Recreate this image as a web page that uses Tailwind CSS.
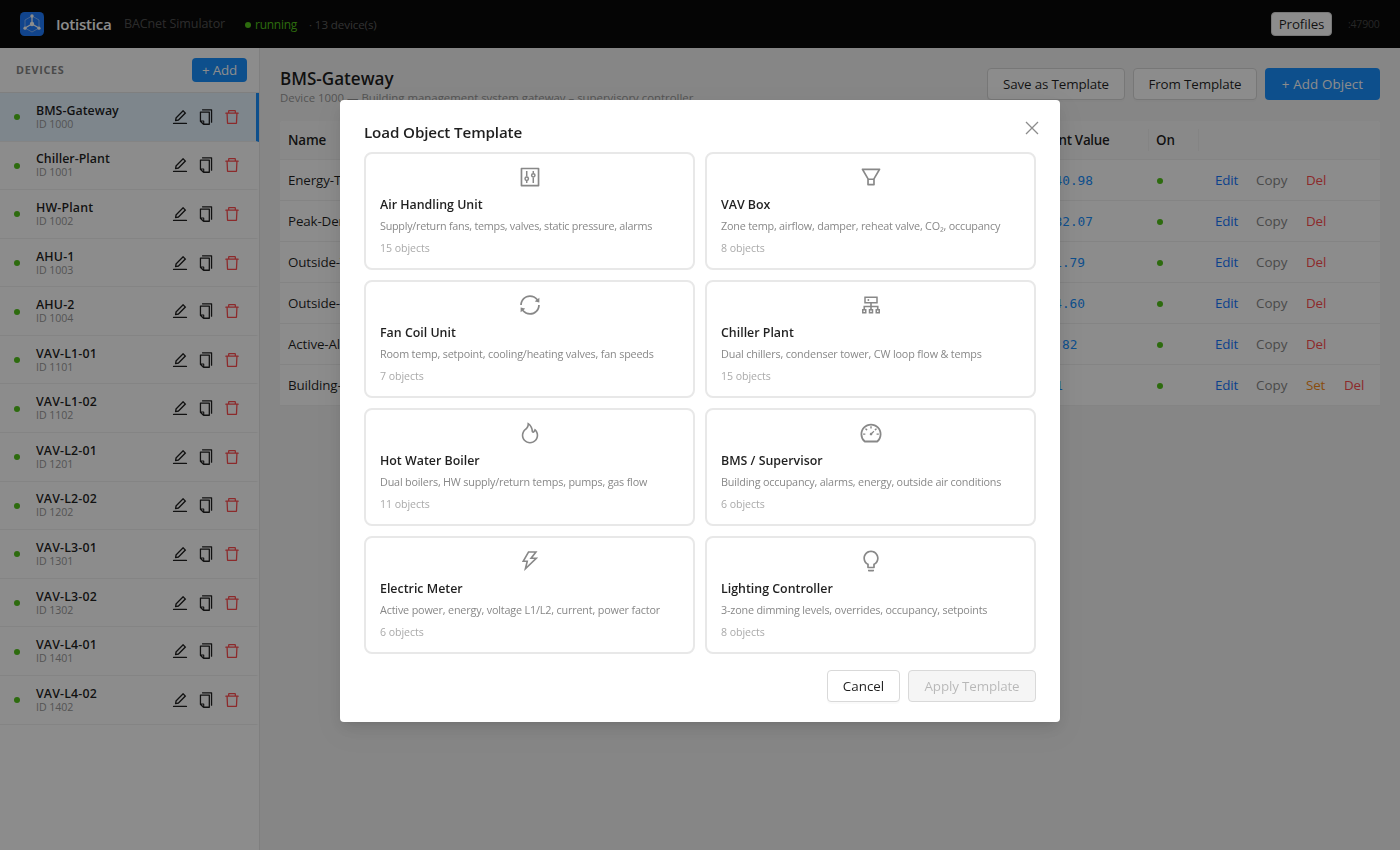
<!DOCTYPE html>
<html lang="en">
<head>
<meta charset="utf-8">
<title>Iotistica BACnet Simulator</title>
<script src="https://cdn.jsdelivr.net/npm/@tailwindcss/browser@4"></script>
</head>
<body class="h-[850px] w-[1400px] overflow-hidden bg-[#f5f5f5] font-['Open_Sans',sans-serif] text-[13.4px] tracking-[-0.15px] text-black/88">
<svg class="hidden">
  <symbol id="edit" viewBox="0 0 1024 1024"><path d="M257.7 752c2 0 4-.2 6-.5L431.9 722c2-.4 3.9-1.3 5.3-2.8l423.9-423.9a9.96 9.96 0 000-14.1L694.9 114.9c-1.9-1.9-4.4-2.9-7.1-2.9s-5.2 1-7.1 2.9L256.8 538.8c-1.5 1.5-2.4 3.3-2.8 5.3l-29.5 168.2a33.5 33.5 0 009.4 29.8c6.6 6.4 14.9 9.9 23.8 9.9zm67.4-174.4L687.8 215l73.3 73.3-362.7 362.6-88.9 15.7 15.6-89zM880 836H144c-17.7 0-32 14.3-32 32v36c0 4.4 3.6 8 8 8h784c4.4 0 8-3.6 8-8v-36c0-17.7-14.3-32-32-32z"/></symbol>
  <symbol id="copy" viewBox="0 0 1024 1024"><path d="M832 64H296c-4.4 0-8 3.6-8 8v56c0 4.4 3.6 8 8 8h496v688c0 4.4 3.6 8 8 8h56c4.4 0 8-3.6 8-8V96c0-17.7-14.3-32-32-32zM704 192H192c-17.7 0-32 14.3-32 32v530.7c0 8.5 3.4 16.6 9.4 22.6l173.3 173.3c2.2 2.2 4.7 4 7.4 5.5v1.9h4.2c3.5 1.3 7.2 2 11 2H704c17.7 0 32-14.3 32-32V224c0-17.7-14.3-32-32-32zM350 856.2L263.9 770H350v86.2zM664 888H414V746c0-22.1-17.9-40-40-40H232V264h432v624z"/></symbol>
  <symbol id="trash" viewBox="0 0 1024 1024"><path d="M360 184h-8c4.4 0 8-3.6 8-8v8h304v-8c0 4.4 3.6 8 8 8h-8v72h72v-80c0-35.3-28.7-64-64-64H352c-35.3 0-64 28.7-64 64v80h72v-72zm504 72H160c-17.7 0-32 14.3-32 32v32c0 4.4 3.6 8 8 8h60.4l24.7 523c1.6 34.1 29.8 61 63.9 61h454c34.2 0 62.3-26.8 63.9-61l24.7-523H888c4.4 0 8-3.6 8-8v-32c0-17.7-14.3-32-32-32zM731.3 840H292.7l-24.2-512h487l-24.2 512z"/></symbol>
  <symbol id="control" viewBox="0 0 1024 1024"><path d="M880 112H144c-17.7 0-32 14.3-32 32v736c0 17.7 14.3 32 32 32h736c17.7 0 32-14.3 32-32V144c0-17.7-14.3-32-32-32zm-40 728H184V184h656v656z"/><path d="M372 256v234M372 678v90M652 256v90M652 534v234" fill="none" stroke="currentColor" stroke-width="64"/><circle cx="372" cy="584" r="72" fill="none" stroke="currentColor" stroke-width="64"/><circle cx="652" cy="440" r="72" fill="none" stroke="currentColor" stroke-width="64"/></symbol>
  <symbol id="filter" viewBox="0 0 1024 1024"><path d="M880.1 154H143.9c-24.5 0-39.8 26.7-27.5 48L349 597.4V838c0 17.7 14.2 32 31.8 32h262.4c17.6 0 31.8-14.3 31.8-32V597.4L907.7 202c12.2-21.3-3.1-48-27.6-48zM603.4 798H420.6V642h182.9v156zm9.6-236.6l-9.5 16.6h-183l-9.5-16.6L212.7 226h598.6L613 561.4z"/></symbol>
  <symbol id="sync" viewBox="0 0 1024 1024"><path d="M168 504.2c1-43.7 10-86.1 26.9-126 17.3-41 42.1-77.7 73.7-109.4S337 212.3 378 195c42.4-17.9 87.4-27 133.9-27s91.5 9.1 133.8 27A341.5 341.5 0 01755 268.8c9.9 9.9 19.2 20.4 27.8 31.4l-60.2 47a8 8 0 003 14.1l175.7 43c5 1.2 9.9-2.6 9.9-7.7l.8-180.9c0-6.7-7.7-10.5-12.9-6.3l-56.4 44.1C765.8 155.1 646.2 92 511.8 92 282.7 92 96.3 275.6 92 503.8a8 8 0 008 8.2h60c4.4 0 7.9-3.5 8-7.8zm756 7.8h-60c-4.4 0-7.9 3.5-8 7.8-1 43.7-10 86.1-26.9 126-17.3 41-42.1 77.8-73.7 109.4A342.45 342.45 0 01512.1 856a342.24 342.24 0 01-243.2-100.8c-9.9-9.9-19.2-20.4-27.8-31.4l60.2-47a8 8 0 00-3-14.1l-175.7-43c-5-1.2-9.9 2.6-9.9 7.7l-.7 181c0 6.7 7.7 10.5 12.9 6.3l56.4-44.1C258.2 868.9 377.8 932 512.2 932c229.2 0 415.5-183.7 419.8-411.8a8 8 0 00-8-8.2z"/></symbol>
  <symbol id="cluster" viewBox="0 0 1024 1024"><path d="M888 680h-54V540H546v-92h238c8.8 0 16-7.2 16-16V168c0-8.8-7.2-16-16-16H240c-8.8 0-16 7.2-16 16v264c0 8.8 7.2 16 16 16h238v92H190v140h-54c-4.4 0-8 3.6-8 8v176c0 4.4 3.6 8 8 8h176c4.4 0 8-3.6 8-8V688c0-4.4-3.6-8-8-8h-54v-72h220v72h-54c-4.4 0-8 3.6-8 8v176c0 4.4 3.6 8 8 8h176c4.4 0 8-3.6 8-8V688c0-4.4-3.6-8-8-8h-54v-72h220v72h-54c-4.4 0-8 3.6-8 8v176c0 4.4 3.6 8 8 8h176c4.4 0 8-3.6 8-8V688c0-4.4-3.6-8-8-8zM256 805.3c0 1.5-1.2 2.7-2.7 2.7h-58.7c-1.5 0-2.7-1.2-2.7-2.7v-58.7c0-1.5 1.2-2.7 2.7-2.7h58.7c1.5 0 2.7 1.2 2.7 2.7v58.7zm288 0c0 1.5-1.2 2.7-2.7 2.7h-58.7c-1.5 0-2.7-1.2-2.7-2.7v-58.7c0-1.5 1.2-2.7 2.7-2.7h58.7c1.5 0 2.7 1.2 2.7 2.7v58.7zM288 384V216h448v168H288zm544 421.3c0 1.5-1.2 2.7-2.7 2.7h-58.7c-1.5 0-2.7-1.2-2.7-2.7v-58.7c0-1.5 1.2-2.7 2.7-2.7h58.7c1.5 0 2.7 1.2 2.7 2.7v58.7zM360 300a40 40 0 1080 0 40 40 0 10-80 0z"/></symbol>
  <symbol id="fire" viewBox="0 0 1024 1024"><path d="M834.1 469.2A347.49 347.49 0 00751.2 354l-29.1-26.7a8.09 8.09 0 00-13 3.3l-13 37.3c-8.1 23.4-23 47.3-44.1 70.8-1.4 1.5-3 1.9-4.1 2-1.1.1-2.8-.1-4.3-1.5-1.4-1.2-2.1-3-2-4.8 3.7-60.2-14.3-128.1-53.7-202C555.3 171 510 123.1 453.4 89.7l-41.3-24.3c-5.4-3.2-12.3 1-12 7.3l2.2 48c1.5 32.8-2.3 61.8-11.3 85.9-11 29.5-26.8 56.9-47 81.5a295.64 295.64 0 01-47.5 46.1 352.6 352.6 0 00-100.3 121.5A347.75 347.75 0 00160 610c0 47.2 9.3 92.9 27.7 136a349.4 349.4 0 0075.5 110.9c32.4 32 70 57.2 111.9 74.7C418.5 949.8 464.5 959 512 959s93.5-9.2 136.9-27.3A348.6 348.6 0 00760.8 857c32.4-32 57.8-69.4 75.5-110.9a344.2 344.2 0 0027.7-136c0-48.8-10-96.2-29.9-140.9zM713 808.5c-53.7 53.2-125 82.4-201 82.4s-147.3-29.2-201-82.4c-53.5-53.1-83-123.5-83-198.4 0-43.5 9.8-85.2 29.1-124 18.8-37.9 46.8-71.8 80.8-97.9a349.6 349.6 0 0058.6-56.8c25-30.5 44.6-64.5 58.2-101a240 240 0 0012.1-46.5c24.1 22.2 44.3 49 61.2 80.4 33.4 62.6 48.8 118.3 45.8 165.7a74.01 74.01 0 0024.4 59.8 73.36 73.36 0 0053.4 18.8c19.7-1 37.8-9.7 51-24.4 13.3-14.9 24.8-30.1 34.4-45.6 14 17.9 25.7 37.4 35 58.4 15.9 35.8 24 73.9 24 113.1 0 74.9-29.5 145.4-83 198.4z"/></symbol>
  <symbol id="dashboard" viewBox="0 0 1024 1024"><path d="M924.8 385.6a446.7 446.7 0 00-96-142.4 446.7 446.7 0 00-142.4-96C631.1 123.8 572.5 112 512 112s-119.1 11.8-174.4 35.2a446.7 446.7 0 00-142.4 96 446.7 446.7 0 00-96 142.4C75.8 440.9 64 499.5 64 560c0 132.7 58.3 257.7 159.9 343.1l1.7 1.4c5.8 4.8 13.1 7.5 20.6 7.5h531.7c7.5 0 14.8-2.7 20.6-7.5l1.7-1.4C901.7 817.7 960 692.7 960 560c0-60.5-11.9-119.1-35.2-174.4zM761.4 836H262.6A371.12 371.12 0 01140 560c0-99.4 38.7-192.8 109-263 70.3-70.3 163.7-109 263-109 99.4 0 192.8 38.7 263 109 70.3 70.3 109 163.7 109 263 0 105.6-44.5 205.5-122.6 276zM623.5 421.5a8.03 8.03 0 00-11.3 0L527.7 506c-18.7-5-39.4-.2-54.1 14.5a55.95 55.95 0 000 79.2 55.95 55.95 0 0079.2 0 55.87 55.87 0 0014.5-54.1l84.5-84.5c3.1-3.1 3.1-8.2 0-11.3l-28.3-28.3zM490 320h44c4.4 0 8-3.6 8-8v-80c0-4.4-3.6-8-8-8h-44c-4.4 0-8 3.6-8 8v80c0 4.4 3.6 8 8 8zm260 218v44c0 4.4 3.6 8 8 8h80c4.4 0 8-3.6 8-8v-44c0-4.4-3.6-8-8-8h-80c-4.4 0-8 3.6-8 8zm12.7-197.2l-31.1-31.1a8.03 8.03 0 00-11.3 0l-56.6 56.6a8.03 8.03 0 000 11.3l31.1 31.1c3.1 3.1 8.2 3.1 11.3 0l56.6-56.6c3.1-3.1 3.1-8.2 0-11.3zm-458.6-31.1a8.03 8.03 0 00-11.3 0l-31.1 31.1a8.03 8.03 0 000 11.3l56.6 56.6c3.1 3.1 8.2 3.1 11.3 0l31.1-31.1c3.1-3.1 3.1-8.2 0-11.3l-56.6-56.6zM262 530h-80c-4.4 0-8 3.6-8 8v44c0 4.4 3.6 8 8 8h80c4.4 0 8-3.6 8-8v-44c0-4.4-3.6-8-8-8z"/></symbol>
  <symbol id="bolt" viewBox="0 0 1024 1024"><path d="M848 359.3H627.7L825.8 109c4.1-5.3.4-13-6.3-13H436c-2.8 0-5.5 1.5-6.9 4L170 547.5c-3.1 5.3.7 12 6.9 12h174.4l-89.4 357.6c-1.9 7.8 7.5 13.3 13.3 7.7L853.5 373c5.2-4.9 1.7-13.7-5.5-13.7zM378.2 732.5l60.3-241H281.1l189.6-327.4h224.6L487 427.4h211L378.2 732.5z"/></symbol>
  <symbol id="bulb" viewBox="0 0 1024 1024"><path d="M632 888H392c-4.4 0-8 3.6-8 8v32c0 17.7 14.3 32 32 32h192c17.7 0 32-14.3 32-32v-32c0-4.4-3.6-8-8-8zM512 64c-181.1 0-328 146.9-328 328 0 121.4 66 227.4 164 284.1V792c0 17.7 14.3 32 32 32h264c17.7 0 32-14.3 32-32V676.1c98-56.7 164-162.7 164-284.1 0-181.1-146.9-328-328-328zm127.9 549.8L604 634.6V752H420V634.6l-35.9-20.8C305.4 568.3 256 484.5 256 392c0-141.4 114.6-256 256-256s256 114.6 256 256c0 92.5-49.4 176.3-128.1 221.8z"/></symbol>
</svg>

<div class="flex h-full flex-col">
  <header class="flex h-12 shrink-0 items-center bg-[#0a0a0a] px-5">
    <svg class="size-6" viewBox="0 0 24 24"><rect width="24" height="24" rx="4.5" fill="#1f7cff"/><path d="M12 4l7 4v8l-7 4-7-4V8z" fill="none" stroke="#fff" stroke-opacity=".45"/><path d="M12 12V4M12 12l-7 4M12 12l7 4" stroke="#fff" stroke-width="1.3"/><circle cx="12" cy="12" r="2.2" fill="#fff"/><circle cx="12" cy="4" r="1.7" fill="#fff"/><circle cx="5" cy="16.2" r="1.6" fill="#fff"/><circle cx="19" cy="16.2" r="1.6" fill="#fff"/></svg>
    <span class="ml-3 w-14 pt-px text-[15.2px] font-semibold tracking-[-0.3px] whitespace-nowrap text-white">Iotistica</span>
    <span class="ml-3 w-[101px] pt-px text-[12.5px] tracking-[-0.1px] whitespace-nowrap text-white/30">BACnet Simulator</span>
    <span class="mt-0.5 ml-5 size-1.5 rounded-full bg-[#52c41a]"></span>
    <span class="ml-1 w-[42px] pt-0.5 text-[12px] tracking-[-0.25px] text-[#52c41a]">running</span>
    <span class="ml-3 pt-0.5 text-[11.6px] tracking-[-0.1px] text-white/35">· 13 device(s)</span>
    <span class="ml-auto flex h-6 w-[61px] items-center justify-center rounded-sm border border-[#d9d9d9] bg-white">Profiles</span>
    <span class="ml-4 w-8 pt-0.5 text-[10.5px] tracking-[-0.2px] text-white/25">:47900</span>
  </header>
  <div class="flex min-h-0 flex-1">
    <aside class="w-[260px] shrink-0 border-r border-[#e8e8e8] bg-white">
      <div class="flex h-[45px] items-center justify-between border-b border-[#e8e8e8] pr-3 pl-4">
        <span class="text-[10.8px] font-bold tracking-[0.7px] text-[#888]">DEVICES</span>
        <span class="flex h-6 w-[55px] items-center justify-center rounded-sm bg-[#1890ff] text-white">+ Add</span>
      </div>
      <div id="devices"></div>
    </aside>
    <main class="flex-1 px-5 pt-5">
      <div class="flex h-[53px] items-start justify-between">
        <div class="flex flex-col">
          <h1 class="text-[17.1px] leading-[22px] font-semibold tracking-[-0.02px]">BMS-Gateway</h1>
          <p class="text-[11.4px] leading-[15px] tracking-normal text-[#999]">Device 1000 — Building management system gateway – supervisory controller</p>
        </div>
        <div class="flex gap-2">
          <span class="flex h-8 w-[138px] items-center justify-center rounded border border-[#d9d9d9] bg-white shadow-[0_2px_0_rgba(0,0,0,0.02)]">Save as Template</span>
          <span class="flex h-8 w-[124px] items-center justify-center rounded border border-[#d9d9d9] bg-white shadow-[0_2px_0_rgba(0,0,0,0.02)]">From Template</span>
          <span class="flex h-8 w-[115px] items-center justify-center rounded bg-[#1890ff] tracking-[0.1px] text-white">+ Add Object</span>
        </div>
      </div>
      <div class="rounded-t bg-white">
        <div class="flex h-[39px] items-center rounded-t border-b border-[#f0f0f0] bg-[#fafafa] font-semibold">
          <span class="w-[736px] pl-2">Name</span>
          <span class="w-[132px] pl-2 tracking-[-0.3px]">Present Value</span>
          <span class="flex h-[22px] w-[51px] items-center border-x border-[#f0f0f0] pl-[7px]">On</span>
        </div>
        <div id="objects"></div>
      </div>
    </main>
  </div>
</div>

<div class="fixed inset-0 flex items-start justify-center bg-black/45 pt-[100px]">
  <div class="h-[622px] w-[720px] rounded bg-white px-6 pt-5 shadow-[0_6px_16px_0_rgba(0,0,0,0.08),0_3px_6px_-4px_rgba(0,0,0,0.12),0_9px_28px_8px_rgba(0,0,0,0.05)]">
    <div class="flex h-8 items-start justify-between">
      <h2 class="text-[15.2px] leading-6 font-semibold tracking-[-0.13px]">Load Object Template</h2>
      <svg class="mt-px mr-[-3px] size-3.5" viewBox="0 0 14 14" fill="none" stroke="#8c8c8c" stroke-width="1.3"><path d="M1 1l12 12M13 1L1 13"/></svg>
    </div>
    <div id="templates" class="grid grid-cols-2 gap-2.5"></div>
    <div class="mt-4 flex justify-end gap-2">
      <span class="flex h-8 w-[73px] items-center justify-center rounded border border-[#d9d9d9] bg-white tracking-normal shadow-[0_2px_0_rgba(0,0,0,0.02)]">Cancel</span>
      <span class="flex h-8 w-32 items-center justify-center rounded border border-[#d9d9d9] bg-[#f5f5f5] text-black/25">Apply Template</span>
    </div>
  </div>
</div>

<script>
const devices = [['BMS-Gateway',1000],['Chiller-Plant',1001],['HW-Plant',1002],['AHU-1',1003],['AHU-2',1004],['VAV-L1-01',1101],['VAV-L1-02',1102],['VAV-L2-01',1201],['VAV-L2-02',1202],['VAV-L3-01',1301],['VAV-L3-02',1302],['VAV-L4-01',1401],['VAV-L4-02',1402]];
document.getElementById('devices').innerHTML = devices.map(([name, id], i) => `
  <div class="flex h-[48.58px] items-center border-r-3 border-b border-b-[#f0f0f0] pl-3.5 pr-[15px] ${i === 0 ? 'border-r-[#1890ff] bg-[#e6f4ff]' : 'border-r-transparent'}">
    <span class="mt-px size-1.5 rounded-full bg-[#52c41a]"></span>
    <div class="ml-4 flex flex-1 flex-col pb-[3px]">
      <span class="text-[12.4px] leading-[18px] font-semibold ${i < 2 ? 'tracking-[0.02px]' : 'tracking-[0.15px]'}">${name}</span>
      <span class="-mt-px text-[10.6px] leading-[10px] tracking-[-0.05px] text-[#999]">ID ${id}</span>
    </div>
    <div class="flex gap-2">
      <svg class="size-[18px] fill-black/88"><use href="#edit"/></svg>
      <svg class="size-[18px] fill-black/88"><use href="#copy"/></svg>
      <svg class="size-[18px] fill-[#ff4d4f]"><use href="#trash"/></svg>
    </div>
  </div>`).join('');

const objects = [['Energy-Total','40.98',77],['Peak-Demand','82.07',77],['Outside-Temp','1.79',69],['Outside-Hum','4.60',69],['Active-Alarms','.82',61.5],['Building-Occ','1',47]];
document.getElementById('objects').innerHTML = objects.map(([name, value, right], i) => `
  <div class="flex h-[41px] items-center border-b border-[#f0f0f0]">
    <span class="w-[736px] pl-2">${name}</span>
    <span class="w-[132px] pt-0.5 font-['DejaVu_Sans_Mono',monospace] text-[12.8px] tracking-normal text-[#1890ff]"><span class="block text-right" style="width:${right}px">${value}</span></span>
    <span class="flex w-[50px] pl-[9px]"><span class="mt-px size-1.5 rounded-full bg-[#52c41a]"></span></span>
    <span class="flex pl-[17px]">
      <span class="w-[41px] text-[#1677ff]">Edit</span>
      <span class="w-[50px] tracking-[0.05px] text-[#888]">Copy</span>
      ${i === 5 ? '<span class="w-[38px] text-[#fa8c16]">Set</span>' : ''}
      <span class="text-[#ff4d4f]">Del</span>
    </span>
  </div>`).join('');

const templates = [
  ['control','Air Handling Unit','Supply/return fans, temps, valves, static pressure, alarms',15,'tracking-[-0.26px]'],
  ['filter','VAV Box','Zone temp, airflow, damper, reheat valve, CO₂, occupancy',8,'tracking-[-0.2px]'],
  ['sync','Fan Coil Unit','Room temp, setpoint, cooling/heating valves, fan speeds',7,'tracking-[-0.17px]'],
  ['cluster','Chiller Plant','Dual chillers, condenser tower, CW loop flow & temps',15,'tracking-[-0.16px]'],
  ['fire','Hot Water Boiler','Dual boilers, HW supply/return temps, pumps, gas flow',11,'tracking-[-0.19px]'],
  ['dashboard','BMS / Supervisor','Building occupancy, alarms, energy, outside air conditions',6,'tracking-[-0.19px]'],
  ['bolt','Electric Meter','Active power, energy, voltage L1/L2, current, power factor',6,'tracking-[-0.17px]'],
  ['bulb','Lighting Controller','3-zone dimming levels, overrides, occupancy, setpoints',8,'tracking-[-0.18px]']];
document.getElementById('templates').innerHTML = templates.map(([icon, title, text, count, tracking]) => `
  <div class="flex h-[118px] flex-col rounded-lg border-2 border-[#e8e8e8] px-3.5 pt-[11px]">
    <svg class="size-6 self-center fill-[#888] text-[#888]"><use href="#${icon}"/></svg>
    <span class="mt-1.5 text-[12.4px] leading-5 font-semibold tracking-normal">${title}</span>
    <span class="text-[10.8px] leading-[22px] whitespace-nowrap text-[#888] ${tracking}">${text.replace('&', '&amp;')}</span>
    <span class="text-[10.6px] leading-[22px] tracking-[-0.05px] text-[#aaa]">${count} objects</span>
  </div>`).join('');
</script>
</body>
</html>
